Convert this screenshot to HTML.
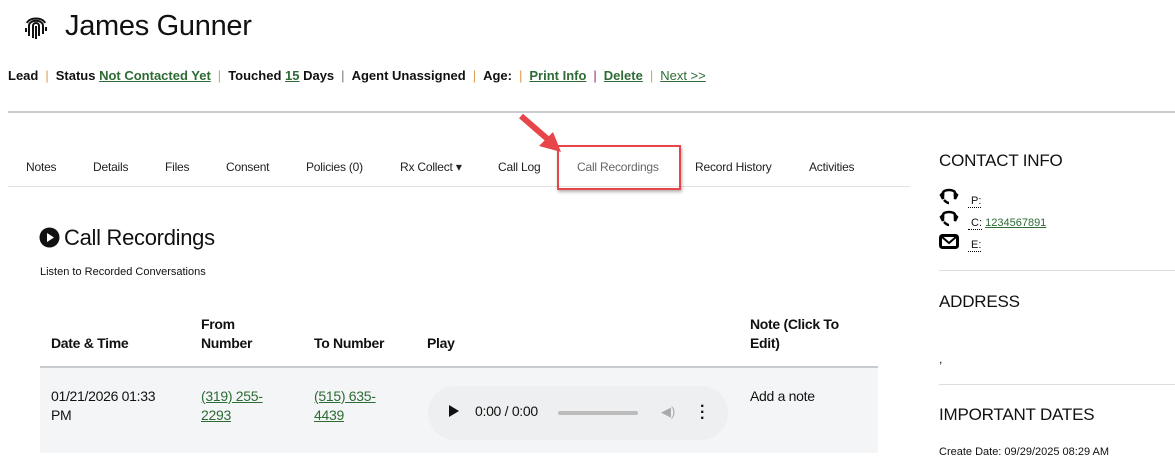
<!DOCTYPE html>
<html><head><style>
body{margin:0;width:1175px;height:453px;overflow:hidden;background:#fff;font-family:"Liberation Sans",sans-serif;color:#111;position:relative}
.a{position:absolute;white-space:nowrap}
.g{color:#2e6b35;text-decoration:underline}
.s{font-size:13px;font-weight:bold;letter-spacing:0}
.sep{color:#e0a050;font-weight:normal;margin:0 7px}
.tab{position:absolute;top:160px;font-size:12px;color:#222;letter-spacing:-0.2px}
.th{font-size:14px;font-weight:bold;letter-spacing:-0.3px;line-height:19px}
.td{font-size:14px;letter-spacing:-0.3px;line-height:19px}
.d{border-bottom:1px dotted #000;font-size:11px}
</style></head><body>
<svg class="a" style="left:24px;top:14px" width="24" height="26" viewBox="0 0 24 26" fill="none" stroke="#111" stroke-width="2"><path d="M3 9C5 3 19 3 21 9M5 22V12C5 5 19 5 19 12V20M9 24V12C9 8 15 8 15 12V22M12 25V12M2 14V18M22 13V17"/></svg>
<div class="a" style="left:65px;top:10px;font-size:29px;letter-spacing:-0.3px">James Gunner</div>
<div class="a s" style="left:8px;top:68px">Lead<span class="sep">|</span>Status <span class="g">Not Contacted Yet</span><span class="sep">|</span>Touched <span class="g">15</span> Days<span class="sep" style="color:#777">|</span>Agent Unassigned<span class="sep">|</span>Age:<span class="sep">|</span><span class="g">Print Info</span><span class="sep" style="color:#903060">|</span><span class="g">Delete</span><span class="sep">|</span><span class="g" style="font-weight:normal">Next &gt;&gt;</span></div>
<div class="a" style="left:8px;top:111px;width:1167px;height:2px;background:#c8cbd0"></div>
<div class="tab" style="left:26px">Notes</div>
<div class="tab" style="left:93px">Details</div>
<div class="tab" style="left:165px">Files</div>
<div class="tab" style="left:226px">Consent</div>
<div class="tab" style="left:306px">Policies (0)</div>
<div class="tab" style="left:400px">Rx Collect ▾</div>
<div class="tab" style="left:498px">Call Log</div>
<div class="tab" style="left:577px;color:#666">Call Recordings</div>
<div class="tab" style="left:695px">Record History</div>
<div class="tab" style="left:809px">Activities</div>
<div class="a" style="left:8px;top:186px;width:902px;height:1px;background:#e2e2e2"></div>
<div class="a" style="left:557px;top:145px;width:120px;height:41px;border:2px solid #e8454a;box-shadow:1px 2px 3px rgba(0,0,0,.3)"></div>
<svg class="a" style="left:515px;top:110px" width="50" height="45"><path d="M6 6L36 32" stroke="#e8454a" stroke-width="6"/><path d="M46 42L24 36L38 22Z" fill="#e8454a"/></svg>
<svg class="a" style="left:39px;top:227px" width="21" height="21"><circle cx="10.5" cy="10.5" r="10" fill="#111"/><path d="M8 6L15 10.5L8 15Z" fill="#fff"/></svg>
<div class="a" style="left:64px;top:225px;font-size:22px;letter-spacing:-0.3px">Call Recordings</div>
<div class="a" style="left:40px;top:266px;font-size:11px">Listen to Recorded Conversations</div>
<div class="a th" style="left:201px;top:315px">From<br>Number</div>
<div class="a th" style="left:51px;top:334px">Date &amp; Time</div>
<div class="a th" style="left:314px;top:334px">To Number</div>
<div class="a th" style="left:427px;top:334px">Play</div>
<div class="a th" style="left:750px;top:315px">Note (Click To<br>Edit)</div>
<div class="a" style="left:40px;top:366px;width:838px;height:2px;background:#c8cbd0"></div>
<div class="a" style="left:40px;top:368px;width:838px;height:85px;background:#f4f5f6"></div>
<div class="a td" style="left:51px;top:387px">01/21/2026 01:33<br>PM</div>
<div class="a td g" style="left:201px;top:387px">(319) 255-<br>2293</div>
<div class="a td g" style="left:314px;top:387px">(515) 635-<br>4439</div>
<div class="a" style="left:428px;top:386px;width:300px;height:54px;border-radius:27px;background:#eeeff0"></div>
<div class="a" style="left:449px;top:405px;width:0;height:0;border-left:10px solid #111;border-top:6px solid transparent;border-bottom:6px solid transparent"></div>
<div class="a" style="left:475px;top:403px;font-size:14px;letter-spacing:-0.3px">0:00 / 0:00</div>
<div class="a" style="left:558px;top:411px;width:80px;height:4px;border-radius:2px;background:#bcbcbc"></div>
<div class="a" style="left:661px;top:404px;font-size:13px;color:#aaa">◀)</div>
<div class="a" style="left:700px;top:404px;font-size:16px;font-weight:bold;line-height:6px">·<br>·<br>·</div>
<div class="a td" style="left:750px;top:387px">Add a note</div>
<div class="a" style="left:939px;top:151px;font-size:17px;letter-spacing:-0.2px">CONTACT INFO</div>
<svg class="a" style="left:939px;top:187px" width="22" height="18" fill="none" stroke="#000" stroke-width="2.5"><path d="M4 9V6C4 2 16 2 16 6V9"/><path d="M2 8L4 6V12ZM18 8L16 6V12Z" fill="#000"/><path d="M5 13Q8 16 10 16"/></svg>
<svg class="a" style="left:939px;top:209px" width="22" height="18" fill="none" stroke="#000" stroke-width="2.5"><path d="M4 9V6C4 2 16 2 16 6V9"/><path d="M2 8L4 6V12ZM18 8L16 6V12Z" fill="#000"/><path d="M5 13Q8 16 10 16"/></svg>
<svg class="a" style="left:939px;top:234px" width="21" height="15"><rect x="1.5" y="1.5" width="17" height="12" rx="2" fill="none" stroke="#000" stroke-width="3"/><path d="M3 3L10 9L17 3" stroke="#000" stroke-width="2" fill="none"/></svg>
<div class="a" style="left:968px;top:195px;font-size:11px"><span class="d">&nbsp;P:</span></div>
<div class="a" style="left:968px;top:217px;font-size:11px"><span class="d">&nbsp;C:</span> <span class="g" style="font-size:11px">1234567891</span></div>
<div class="a" style="left:968px;top:239px;font-size:11px"><span class="d">&nbsp;E:</span></div>
<div class="a" style="left:939px;top:270px;width:236px;height:1px;background:#ddd"></div>
<div class="a" style="left:939px;top:292px;font-size:17px;letter-spacing:-0.2px">ADDRESS</div>
<div class="a" style="left:939px;top:352px;font-size:12px">,</div>
<div class="a" style="left:939px;top:384px;width:236px;height:1px;background:#ddd"></div>
<div class="a" style="left:939px;top:405px;font-size:17px;letter-spacing:-0.2px">IMPORTANT DATES</div>
<div class="a" style="left:939px;top:446px;font-size:11px">Create Date: 09/29/2025 08:29 AM</div>
</body></html>
